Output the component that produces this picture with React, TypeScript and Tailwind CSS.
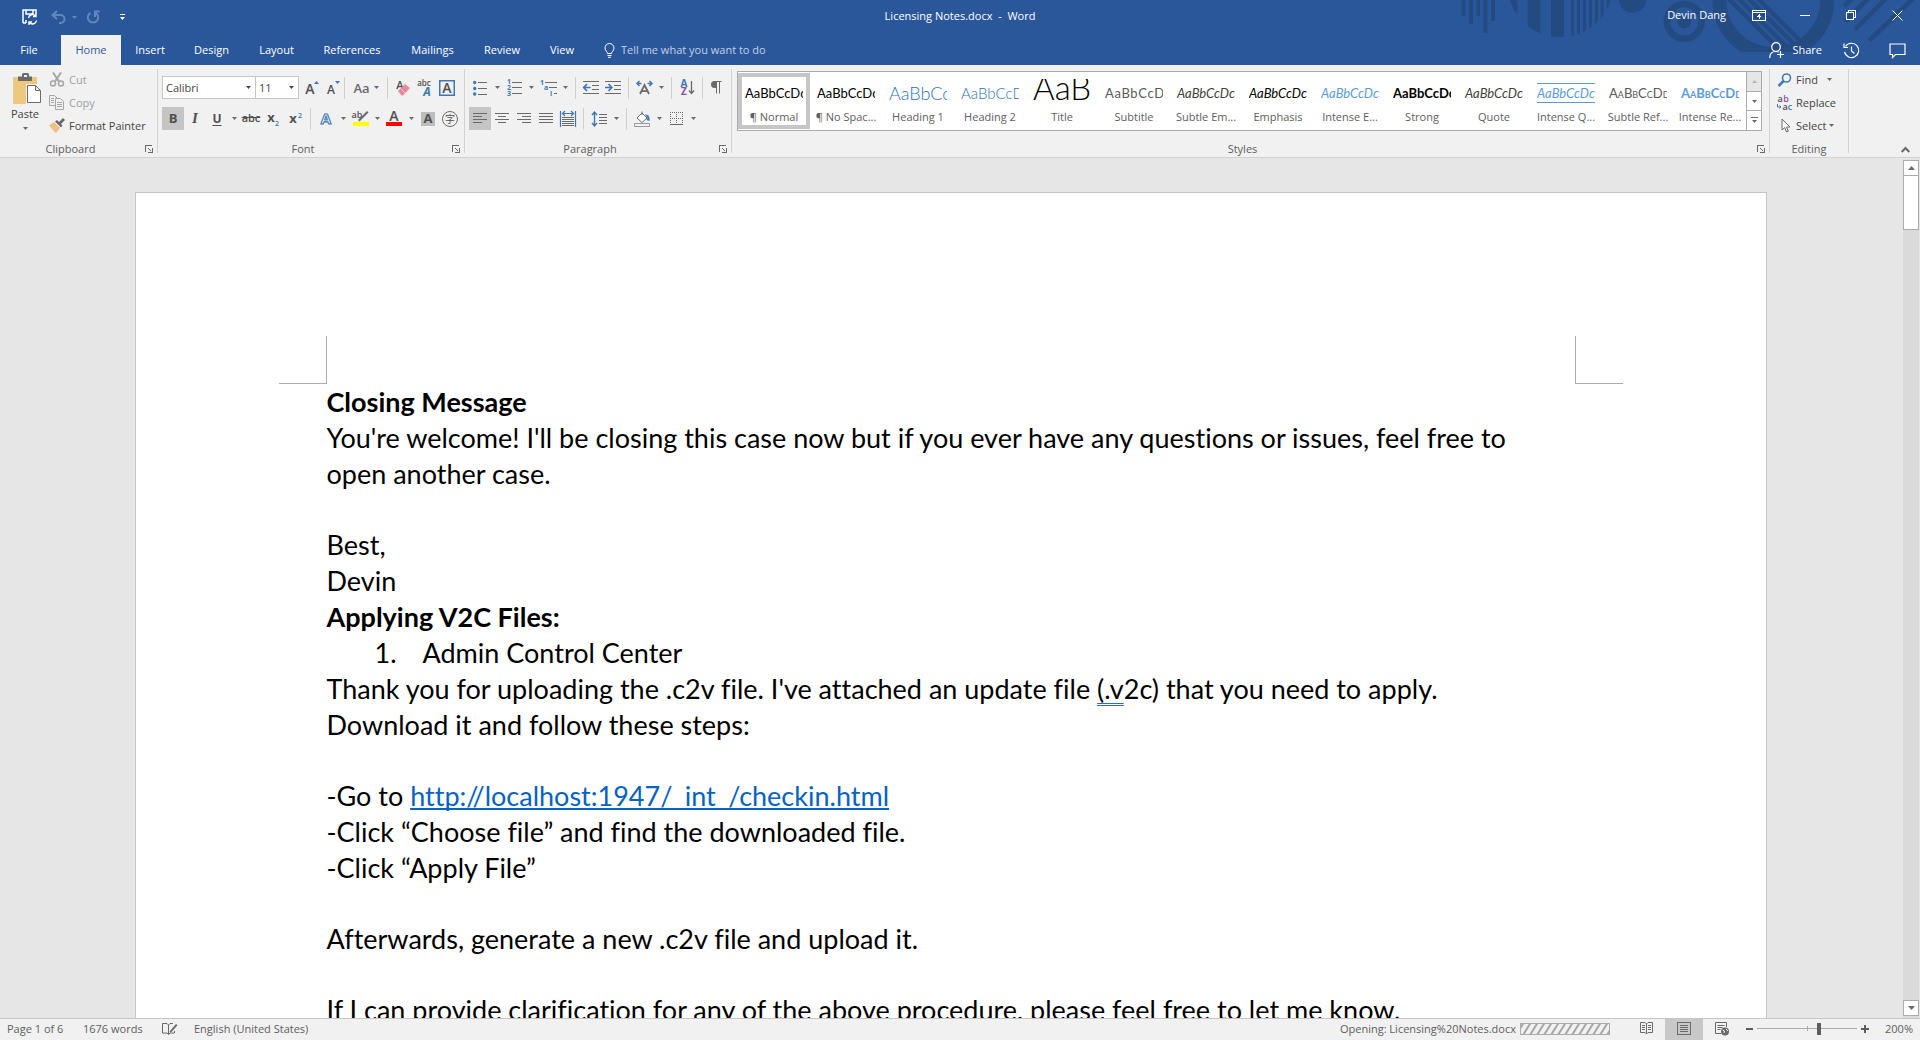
import React, { useState } from "react";

const UI_FONT = "font-['Open_Sans','Noto_Sans',sans-serif]";
const DOC_FONT = "font-['Lato','Open_Sans',sans-serif]";

const GRAY = "#6a6a6a";
const DARK = "#505050";
const BLUE = "#3e78b3";

type IconProps = { w: number; h: number; children: React.ReactNode; crisp?: boolean; className?: string };

function Icon({ w, h, children, crisp, className }: IconProps) {
  return (
    <svg
      width={w}
      height={h}
      viewBox={`0 0 ${w} ${h}`}
      fill="none"
      aria-hidden="true"
      className={`shrink-0 overflow-visible ${className ?? ""}`}
      shapeRendering={crisp ? "crispEdges" : undefined}
    >
      {children}
    </svg>
  );
}

function Caret({ color = "#6a6a6a" }: { color?: string }) {
  return (
    <Icon w={5} h={3}>
      <path d="M0 0h5L2.5 3z" fill={color} />
    </Icon>
  );
}

function Tool({ label, active, children, width = "w-[22px]" }: { label: string; active?: boolean; children: React.ReactNode; width?: string }) {
  return (
    <button
      type="button"
      aria-label={label}
      aria-pressed={active}
      className={`flex h-[23px] shrink-0 items-center justify-center ${width} ${active ? "bg-[#c5c5c5]" : ""}`}
    >
      {children}
    </button>
  );
}

function SplitTool({ label, children }: { label: string; children: React.ReactNode }) {
  return (
    <div className="flex">
      <Tool label={label}>{children}</Tool>
      <Tool label={`${label} options`} width="w-3">
        <Caret />
      </Tool>
    </div>
  );
}

function Sep() {
  return <span className="mx-1 h-[22px] w-px shrink-0 bg-[#d0d0d0]" />;
}

function GroupLabel({ children, launcher = true }: { children: string; launcher?: boolean }) {
  return (
    <div className="flex h-4 items-center text-[11px] leading-4 text-[#5e5e5e]">
      <span className="flex-1 text-center">{children}</span>
      {launcher && (
        <button type="button" aria-label={`${children} settings`} className="flex h-4 w-4 items-center justify-center">
          <Icon w={8} h={8} crisp>
            <path d="M0.5 7V0.5H7" stroke={GRAY} />
            <path d="M3 3l3 3M7.5 3v4.5H3" stroke={GRAY} />
          </Icon>
        </button>
      )}
    </div>
  );
}

function Group({ name, launcher, className, children }: { name: string; launcher?: boolean; className?: string; children: React.ReactNode }) {
  return (
    <section aria-label={name} className={`flex flex-col justify-between ${className ?? ""}`}>
      {children}
      <GroupLabel launcher={launcher}>{name}</GroupLabel>
    </section>
  );
}

function GroupDivider() {
  return <span className="my-1 w-px shrink-0 bg-[#d2d2d2]" />;
}

function HeaderArt() {
  return (
    <svg className="pointer-events-none absolute right-0 top-0" width="490" height="65" viewBox="0 0 1470 195" fill="#244a82" aria-hidden="true">
      <defs>
        <clipPath id="bars">
          <circle cx="391" cy="-46" r="158" />
        </clipPath>
        <clipPath id="ringInner">
          <circle cx="1030" cy="0" r="142" />
        </clipPath>
        <clipPath id="ringOuter">
          <rect x="840" y="0" width="390" height="157" />
        </clipPath>
      </defs>
      <path d="M95 0h11v48H95zM117 0h12v72h-12zM139 0h11v48h-11zM160 0h12v98h-12zM183 0h12v62h-12z" />
      <g clipPath="url(#bars)">
        <path d="M238 0h24v120h-24zM293 0h38v120h-38zM363 0h39v120h-39zM424 0h8v120h-8zM441 0h9v120h-9zM459 0h9v120h-9zM477 0h9v120h-9zM495 0h9v120h-9zM512 0h9v120h-9zM530 0h14v120h-14z" />
      </g>
      <circle cx="608" cy="-3" r="41" />
      <circle cx="763" cy="64" r="52" fill="none" stroke="#244a82" strokeWidth="20" />
      <circle cx="763" cy="64" r="21" />
      <g clipPath="url(#ringOuter)">
        <circle cx="1030" cy="0" r="162" fill="none" stroke="#244a82" strokeWidth="42" />
      </g>
      <g clipPath="url(#ringInner)" stroke="#244a82" strokeWidth="13">
        <path d="M895 -5l150 150M922 -8l150 150M950 -10l150 150M978 -10l140 140" />
      </g>
      <g stroke="#244a82" strokeWidth="14">
        <path d="M1243 18l25 -24M1245 65l70 -70M1275 88l95 -95M1318 122l130 -125" />
      </g>
    </svg>
  );
}

function TitleBar() {
  return (
    <div className="grid h-[35px] grid-cols-[1fr_auto_1fr] items-start text-[11px] leading-4 text-white">
      <div className="flex h-[34px] items-center pl-[14px]">
        <button type="button" aria-label="Save" className="flex h-6 w-8 items-center justify-center">
          <Icon w={16} h={16}>
            <path d="M1 14V1h13v4M1 14h3M4 1v4h7V1M4 14v-3" stroke="#fff" strokeWidth="1.5" />
            <path d="M6.5 9a4 4 0 0 1 7-2M14.500 11.5a4 4 0 0 1-7 2M14 4.500V7.500h-3M7 16v-3h3" stroke="#fff" strokeWidth="1.4" />
          </Icon>
        </button>
        <button type="button" aria-label="Undo" className="ml-[3px] flex h-6 w-[18px] items-center justify-center">
          <Icon w={15} h={14}>
            <path d="M6 1L1.5 5 6 9M2 5h7.500a4 4 0 0 1 0 8H8" stroke="#6187bb" strokeWidth="2" />
          </Icon>
        </button>
        <button type="button" aria-label="Undo history" className="flex h-6 w-[14px] items-center justify-center">
          <Caret color="#6187bb" />
        </button>
        <button type="button" aria-label="Redo" className="ml-[3px] flex h-6 w-[18px] items-center justify-center">
          <Icon w={14} h={14}>
            <path d="M4.500 2.800a5.200 5.200 0 1 0 5 0M9 7V1.500h4.500" stroke="#6187bb" strokeWidth="2" />
          </Icon>
        </button>
        <button type="button" aria-label="Customize quick access" className="ml-3 flex h-6 w-4 items-center justify-center">
          <Icon w={5} h={6}>
            <path d="M0 0h5v1H0zM0 3h5L2.5 6z" fill="#fff" />
          </Icon>
        </button>
      </div>
      <h1 className="flex h-8 items-center">Licensing Notes.docx&nbsp; -&nbsp; Word</h1>
      <div className="flex h-[30px] items-center justify-end">
        <span className="mr-2.5">Devin Dang</span>
        <button type="button" aria-label="Ribbon display options" className="flex h-full w-[46px] items-center justify-center">
          <Icon w={14} h={11} crisp>
            <path d="M0.5 0.5h13v10H0.500zM0.5 2.5h13" stroke="#fff" />
            <path d="M7 4v5M5 6.5h4M6 5.5h2" stroke="#fff" />
          </Icon>
        </button>
        <button type="button" aria-label="Minimize" className="flex h-full w-[46px] items-center justify-center">
          <span className="h-px w-2.5 bg-white" />
        </button>
        <button type="button" aria-label="Restore" className="flex h-full w-[46px] items-center justify-center">
          <Icon w={10} h={10} crisp>
            <path d="M0.5 2.5h7v7h-7zM2.5 2.5v-2h7v7h-2" stroke="#fff" />
          </Icon>
        </button>
        <button type="button" aria-label="Close" className="flex h-full w-[46px] items-center justify-center">
          <Icon w={11} h={11}>
            <path d="M0.5 0.5l10 10M10.5 0.5l-10 10" stroke="#fff" />
          </Icon>
        </button>
      </div>
    </div>
  );
}

const TABS = [
  { name: "File", cls: "w-[61px] pr-[3px]" },
  { name: "Home", cls: "w-[60px]" },
  { name: "Insert", cls: "w-[58px]" },
  { name: "Design", cls: "w-[65px]" },
  { name: "Layout", cls: "w-[65px]" },
  { name: "References", cls: "w-[86px]" },
  { name: "Mailings", cls: "w-[75px]" },
  { name: "Review", cls: "w-[64px]" },
  { name: "View", cls: "w-[56px]" },
];

function TabRow() {
  return (
    <div className="flex h-[30px] items-stretch text-[11px] leading-4 text-white">
      <nav role="tablist" aria-label="Ribbon" className="flex">
        {TABS.map((t) => (
          <button
            key={t.name}
            type="button"
            role="tab"
            aria-selected={t.name === "Home"}
            className={`flex items-center justify-center ${t.cls} ${t.name === "Home" ? "bg-[#f1f1f1] text-[#2a579a]" : ""}`}
          >
            {t.name}
          </button>
        ))}
      </nav>
      <label className="ml-[14px] flex items-center gap-1.5 text-[#c3d0e6]">
        <Icon w={11} h={15}>
          <path d="M3.5 10.5C3.5 8.5 1 8 1 5a4.5 4.5 0 0 1 9 0c0 3-2.5 3.5-2.5 5.5zM3.5 12.5h4M4 14.3h3" stroke="#fff" />
        </Icon>
        <input
          type="text"
          aria-label="Tell me what you want to do"
          placeholder="Tell me what you want to do"
          className="w-44 bg-transparent outline-none placeholder:text-[#c3d0e6]"
        />
      </label>
      <div className="ml-auto flex items-center pr-[14px]">
        <button type="button" className="flex items-center gap-[7px]">
          <Icon w={16} h={17}>
            <circle cx="7" cy="5" r="4.3" stroke="#fff" strokeWidth="1.2" />
            <path d="M0.7 16c0-4 2.3-6.5 6.3-6.5 1.2 0 2 .3 2.6.6M11.5 9v7M8 12.5h7" stroke="#fff" strokeWidth="1.2" />
          </Icon>
          Share
        </button>
        <button type="button" aria-label="Activity" className="ml-[21px]">
          <Icon w={17} h={17}>
            <path d="M2.5 4.500A7.200 7.200 0 1 1 1.5 10M1 1.500v4h4M8.500 4.500V9l3 2.5" stroke="#fff" strokeWidth="1.2" />
          </Icon>
        </button>
        <button type="button" aria-label="Comments" className="ml-[29px]">
          <Icon w={17} h={15}>
            <path d="M1 1h15v10.5H6.500L3.500 14.500v-3H1z" stroke="#fff" strokeWidth="1.2" />
          </Icon>
        </button>
      </div>
    </div>
  );
}

function ClipboardGroup() {
  return (
    <Group name="Clipboard" className="w-[157px]">
      <div className="flex pl-px pt-[3px] text-[11px] leading-4">
        <button type="button" className="flex w-12 flex-col items-center pt-1 text-[#444]">
          <Icon w={30} h={32} className="ml-1">
            <path d="M1 5h24v27H1z" fill="#edc87e" />
            <path d="M6 9V4.500h4V2.500Q10 1 11.500 1h4Q17 1 17 2.500v2h3V9z" fill={GRAY} />
            <path d="M12 3h3v2h-3z" fill="#f1f1f1" />
            <path d="M14 12h15v20H14z" fill="#f1f1f1" />
            <path d="M15.5 13.5h8l5 5v12h-13zM23.5 13.5v5h5" fill="#fff" stroke={GRAY} />
          </Icon>
          <span className="mt-0.5">Paste</span>
          <span className="flex h-[13px] items-center"><Caret /></span>
        </button>
        <div className="flex flex-col">
          <button type="button" className="flex h-[23px] items-center gap-1 text-[#a0a0a0]">
            <Icon w={16} h={15}>
              <path d="M4 0.500l6 9M12 0.500l-6 9" stroke="#a6a6a6" strokeWidth="2" />
              <circle cx="4" cy="11.5" r="2.5" stroke="#a6a6a6" strokeWidth="1.5" />
              <circle cx="12" cy="11.5" r="2.5" stroke="#a6a6a6" strokeWidth="1.5" />
            </Icon>
            Cut
          </button>
          <button type="button" className="flex h-[23px] items-center gap-1 text-[#a0a0a0]">
            <Icon w={16} h={15}>
              <path d="M0.5 0.5h5l3 3v7h-8z" stroke="#a6a6a6" fill="#f1f1f1" />
              <path d="M2 3.5h3M2 5.5h3M2 7.5h3" stroke="#a6a6a6" />
              <path d="M6.5 3.5h5l3 3v8h-8z" stroke="#a6a6a6" fill="#f1f1f1" />
              <path d="M8 7.5h5M8 9.5h5M8 11.5h5" stroke="#a6a6a6" />
            </Icon>
            Copy
          </button>
          <button type="button" className="flex h-[23px] items-center gap-1 text-[#444]">
            <Icon w={16} h={15}>
              <path d="M0 7.500L5 4l6 6-3.500 4.500H6z" fill="#edc087" />
              <path d="M6 3.500l2-1.500 2 2L14 0l2 2-4 4 1.500 1.500L12 9.500z" fill={GRAY} />
            </Icon>
            Format Painter
          </button>
        </div>
      </div>
    </Group>
  );
}

function ComboBox({ label, options, className }: { label: string; options: string[]; className: string }) {
  return (
    <span className={`relative flex h-[23px] items-center border border-[#c6c6c6] bg-white ${className}`}>
      <select aria-label={label} className="h-full w-full appearance-none bg-transparent pl-[3px] text-[11px] leading-4 text-[#444] outline-none">
        {options.map((o) => (
          <option key={o}>{o}</option>
        ))}
      </select>
      <span className="pointer-events-none absolute right-1 top-[9px] flex"><Caret color="#444" /></span>
    </span>
  );
}

type GlyphProps = { x: number; y: number; size: number; children: string; fill?: string; weight?: number; italic?: boolean };

function Glyph({ x, y, size, children, fill = DARK, weight = 600, italic }: GlyphProps) {
  return (
    <text x={x} y={y} fontSize={size} fill={fill} fontWeight={weight} fontStyle={italic ? "italic" : undefined} textAnchor="middle">
      {children}
    </text>
  );
}

function FontGroup() {
  const [bold, setBold] = useState(true);
  return (
    <Group name="Font" className="w-[306px]">
      <div className="flex flex-col gap-2 pl-1 pt-[11px]">
        <div className="flex">
          <ComboBox label="Font" options={["Calibri", "Arial"]} className="w-[94px]" />
          <ComboBox label="Font size" options={["11", "12"]} className="-ml-px w-11" />
          <div className="ml-px flex items-center">
            <Tool label="Grow font">
              <Icon w={18} h={16}>
                <Glyph x={8} y={14} size={14}>A</Glyph>
                <path d="M12 4l2.500-3L17 4z" fill={BLUE} />
              </Icon>
            </Tool>
            <Tool label="Shrink font">
              <Icon w={18} h={16}>
                <Glyph x={7} y={14} size={12}>A</Glyph>
                <path d="M11 1l2.500 3L16 1z" fill={BLUE} />
              </Icon>
            </Tool>
            <span className="mr-1 h-[22px] w-px bg-[#d0d0d0]" />
            <button type="button" aria-label="Change case" className="flex h-[23px] w-[34px] items-center justify-center gap-1 text-[13px] font-semibold leading-4 text-[#6a6a6a]">
              Aa <Caret />
            </button>
            <Sep />
            <Tool label="Clear formatting">
              <Icon w={16} h={16}>
                <Glyph x={5} y={9} size={11}>A</Glyph>
                <path d="M3 11l7-7 5 4-7 7.500H6.500z" fill="#e8899a" />
                <path d="M5.500 8.500l4.500 4.500" stroke="#f7c4cc" />
              </Icon>
            </Tool>
            <Tool label="Phonetic guide">
              <Icon w={16} h={18}>
                <Glyph x={7} y={7} size={8}>abc</Glyph>
                <Glyph x={10} y={17} size={12} fill={BLUE} weight={700} italic>A</Glyph>
              </Icon>
            </Tool>
            <Tool label="Character border">
              <Icon w={16} h={16}>
                <path d="M0.750 0.750h14.500v14.500H0.750z" stroke={BLUE} strokeWidth="1.5" />
                <Glyph x={8} y={13} size={14}>A</Glyph>
              </Icon>
            </Tool>
          </div>
        </div>
        <div className="flex items-center text-[#505050]">
          <button
            type="button"
            aria-pressed={bold}
            aria-label="Bold"
            onClick={() => setBold(!bold)}
            className={`flex h-[23px] w-[22px] items-center justify-center text-[13px] font-bold ${bold ? "bg-[#c5c5c5]" : ""}`}
          >
            B
          </button>
          <Tool label="Italic"><span className="font-['Liberation_Serif',serif] text-[15px] font-bold italic">I</span></Tool>
          <Tool label="Underline"><span className="text-[12px] font-bold underline underline-offset-2">U</span></Tool>
          <Tool label="Underline style" width="w-3"><Caret /></Tool>
          <Tool label="Strikethrough"><span className="text-[11px] font-semibold line-through">abc</span></Tool>
          <Tool label="Subscript">
            <Icon w={14} h={14}>
              <Glyph x={5} y={10} size={13} weight={700}>x</Glyph>
              <Glyph x={11} y={14} size={7} fill={BLUE}>2</Glyph>
            </Icon>
          </Tool>
          <Tool label="Superscript">
            <Icon w={14} h={14}>
              <Glyph x={5} y={11} size={13} weight={700}>x</Glyph>
              <Glyph x={12} y={6} size={7} fill={BLUE}>2</Glyph>
            </Icon>
          </Tool>
          <Sep />
          <SplitTool label="Text effects">
            <Icon w={16} h={16}>
              <text x="8" y="13" fontSize="15" fontWeight="700" textAnchor="middle" fill="#fff" stroke={BLUE} strokeWidth="1.1">A</text>
            </Icon>
          </SplitTool>
          <SplitTool label="Text highlight">
            <Icon w={17} h={17}>
              <Glyph x={5} y={8} size={9}>ab</Glyph>
              <path d="M6 10l3-3 6-6 1.500 1.500-6 6-3 3z" fill={GRAY} />
              <path d="M1 12h16v4H1z" fill="#ff0" />
            </Icon>
          </SplitTool>
          <SplitTool label="Font color">
            <Icon w={16} h={17}>
              <Glyph x={8} y={11} size={14}>A</Glyph>
              <path d="M0 12h16v4H0z" fill="#f00" />
            </Icon>
          </SplitTool>
          <Tool label="Character shading">
            <span className="flex h-[14px] w-[14px] items-center justify-center bg-[#bdbdbd] text-[13px] font-bold leading-none">A</span>
          </Tool>
          <Tool label="Enclose characters">
            <span className="flex h-4 w-4 items-center justify-center rounded-full border border-[#6a6a6a] font-['Noto_Sans_CJK_SC',sans-serif] text-[10px] leading-none">字</span>
          </Tool>
        </div>
      </div>
    </Group>
  );
}

function Lines({ widths, align }: { widths: number[]; align: "l" | "c" | "r" }) {
  return (
    <Icon w={14} h={13} crisp>
      {widths.map((w, i) => (
        <rect key={i} x={align === "l" ? 0 : align === "c" ? (14 - w) / 2 : 14 - w} y={1 + i * 3} width={w} height={1} fill={GRAY} />
      ))}
    </Icon>
  );
}

function ParagraphGroup() {
  return (
    <Group name="Paragraph" className="w-[266px]">
      <div className="flex flex-col gap-2 pl-1 pt-[11px]">
        <div className="flex items-center">
          <SplitTool label="Bullets">
            <Icon w={14} h={16}>
              <path d="M5 2.5h9M5 8.5h9M5 14.5h9" stroke={GRAY} />
              <circle cx="1.7" cy="2.5" r="1.7" fill={BLUE} />
              <circle cx="1.7" cy="8.5" r="1.7" fill={BLUE} />
              <circle cx="1.7" cy="14" r="1.7" fill={BLUE} />
            </Icon>
          </SplitTool>
          <SplitTool label="Numbering">
            <Icon w={15} h={17}>
              <path d="M5 3.5h10M5 8.5h10M5 14.5h10" stroke={GRAY} />
              <Glyph x={2} y={5} size={7} fill={BLUE} weight={700}>1</Glyph>
              <Glyph x={2} y={11} size={7} fill={BLUE} weight={700}>2</Glyph>
              <Glyph x={2} y={17} size={7} fill={BLUE} weight={700}>3</Glyph>
            </Icon>
          </SplitTool>
          <SplitTool label="Multilevel list">
            <Icon w={17} h={17}>
              <path d="M5 3.5h12M9 8.5h8M14 14.5h3" stroke={GRAY} />
              <Glyph x={2} y={6} size={7} fill={BLUE} weight={700}>1</Glyph>
              <Glyph x={6} y={11} size={7} fill={BLUE} weight={700}>a</Glyph>
              <Glyph x={11} y={17} size={7} fill={BLUE} weight={700}>i</Glyph>
            </Icon>
          </SplitTool>
          <Sep />
          <Tool label="Decrease indent">
            <Icon w={16} h={13}>
              <path d="M0 0.5h16M9 4.5h7M9 8.5h7M0 12.5h16" stroke={GRAY} />
              <path d="M0.5 6.5h7M4 3L0.7 6.5 4 10" stroke={BLUE} strokeWidth="1.7" />
            </Icon>
          </Tool>
          <Tool label="Increase indent">
            <Icon w={16} h={13}>
              <path d="M0 0.5h16M9 4.5h7M9 8.5h7M0 12.5h16" stroke={GRAY} />
              <path d="M0 6.5h7M3.5 3l3.3 3.5L3.5 10" stroke={BLUE} strokeWidth="1.7" />
            </Icon>
          </Tool>
          <Sep />
          <SplitTool label="Asian layout">
            <Icon w={17} h={15}>
              <path d="M4 14L8.500 5l4.500 9M5.500 11.200h6" stroke={GRAY} strokeWidth="1.8" />
              <path d="M1 3.5h4.500M3.500 1L1 3.500 3.500 6M16 3.500h-4.500M13.500 1L16 3.500 13.500 6" stroke={BLUE} strokeWidth="1.5" />
            </Icon>
          </SplitTool>
          <Sep />
          <Tool label="Sort">
            <Icon w={15} h={17}>
              <Glyph x={4} y={8} size={10} fill={BLUE} weight={700}>A</Glyph>
              <Glyph x={4} y={16} size={10} fill="#8a4fa8" weight={700}>Z</Glyph>
              <path d="M11.5 2v12M9 11.5l2.500 3 2.500-3" stroke={GRAY} strokeWidth="1.3" />
            </Icon>
          </Tool>
          <Sep />
          <Tool label="Show paragraph marks">
            <Icon w={11} h={13} className="mr-1">
              <path d="M5 7H3.500A3.300 3.300 0 0 1 3.500 0H10.500V1H9V12.500H8V1H6V12.500H5z" fill={GRAY} />
            </Icon>
          </Tool>
        </div>
        <div className="flex items-center">
          <Tool label="Align left" active><Lines align="l" widths={[14, 9, 14, 9]} /></Tool>
          <Tool label="Center"><Lines align="c" widths={[14, 8, 14, 8]} /></Tool>
          <Tool label="Align right"><Lines align="r" widths={[14, 9, 14, 9]} /></Tool>
          <Tool label="Justify"><Lines align="l" widths={[14, 14, 14, 14]} /></Tool>
          <Tool label="Distribute">
            <Icon w={16} h={16}>
              <path d="M0.5 0v16M15.5 0v16M2.5 2.500h11M5 0L2.500 2.500 5 5M11 0l2.500 2.500L11 5" stroke={BLUE} strokeWidth="1.2" />
              <path d="M2 6.500h12M2 8.500h12M2 10.500h12M2 12.500h12M2 14.500h12" stroke={GRAY} />
            </Icon>
          </Tool>
          <Sep />
          <SplitTool label="Line spacing">
            <Icon w={15} h={16}>
              <path d="M2.5 1.5v13M0 4l2.500-3L5 4M0 12l2.500 3L5 12" stroke={BLUE} strokeWidth="1.4" />
              <path d="M7 3.5h8M7 6.5h8M7 9.5h8M7 12.5h8" stroke={GRAY} />
            </Icon>
          </SplitTool>
          <Sep />
          <SplitTool label="Shading">
            <Icon w={17} h={16}>
              <path d="M3 7l5-5 5 5-5 4.500zM8 4V0.500" stroke={GRAY} fill="#fff" />
              <path d="M11 3.500c3.500 0 5 2 4.500 6.500L12.500 9l1-2z" fill={BLUE} />
              <path d="M0.5 12.5h15v3H0.500z" stroke="#999" fill="#f1f1f1" />
            </Icon>
          </SplitTool>
          <SplitTool label="Borders">
            <Icon w={13} h={13} crisp>
              <path d="M0 0.5h13M0 6.5h13M0.5 0v12M6.5 0v12M12.5 0v12" stroke={GRAY} strokeDasharray="1 1" />
              <path d="M0 12.5h13" stroke={GRAY} />
            </Icon>
          </SplitTool>
        </div>
      </div>
    </Group>
  );
}

const SAMPLE_BOX = "mt-0.5 h-6";

const STYLES = [
  { label: "¶ Normal", sample: "AaBbCcDc", box: SAMPLE_BOX, cls: "text-[13px] leading-7 text-black" },
  { label: "¶ No Spac...", sample: "AaBbCcDc", box: SAMPLE_BOX, cls: "text-[13px] leading-7 text-black" },
  { label: "Heading 1", sample: "AaBbCc", box: SAMPLE_BOX, cls: "text-[18px] font-light leading-7 text-[#2e74b5]" },
  { label: "Heading 2", sample: "AaBbCcD", box: SAMPLE_BOX, cls: "text-[15px] font-light leading-7 text-[#2e74b5]" },
  { label: "Title", sample: "AaB", box: SAMPLE_BOX, cls: "text-[33px] font-light leading-4 text-black" },
  { label: "Subtitle", sample: "AaBbCcD", box: SAMPLE_BOX, cls: "text-[13px] leading-7 tracking-wider text-[#5a5a5a]" },
  { label: "Subtle Em...", sample: "AaBbCcDc", box: SAMPLE_BOX, cls: "text-[13px] italic leading-7 text-[#404040]" },
  { label: "Emphasis", sample: "AaBbCcDc", box: SAMPLE_BOX, cls: "text-[13px] italic leading-7 text-black" },
  { label: "Intense E...", sample: "AaBbCcDc", box: SAMPLE_BOX, cls: "text-[13px] italic leading-7 text-[#5b9bd5]" },
  { label: "Strong", sample: "AaBbCcDc", box: SAMPLE_BOX, cls: "text-[13px] font-bold leading-7 text-black" },
  { label: "Quote", sample: "AaBbCcDc", box: SAMPLE_BOX, cls: "text-[13px] italic leading-7 text-[#404040]" },
  { label: "Intense Q...", sample: "AaBbCcDc", box: "mt-1.5 h-5 border-y border-[#5b9bd5]", cls: "text-[13px] italic leading-[18px] text-[#5b9bd5]" },
  { label: "Subtle Ref...", sample: "AaBbCcDd", box: SAMPLE_BOX, cls: "text-[13px] leading-7 [font-variant-caps:small-caps] text-[#5a5a5a]" },
  { label: "Intense Re...", sample: "AaBbCcDd", box: SAMPLE_BOX, cls: "text-[13px] font-bold leading-7 [font-variant-caps:small-caps] text-[#5b9bd5]" },
];

function StylesGroup() {
  return (
    <Group name="Styles" className="min-w-0 flex-1">
      <div className="flex pl-[5px] pr-[7px] pt-1.5">
        <div className="flex h-[60px] min-w-0 flex-1 border border-[#ababab] bg-white">
          <div className="flex min-w-0 flex-1 overflow-hidden pt-px">
            {STYLES.map((s, i) => (
              <button
                key={s.label}
                type="button"
                className={`flex h-14 w-[72px] shrink-0 flex-col items-center justify-between border-4 ${i === 0 ? "border-[#c6c6c6]" : "border-transparent"}`}
              >
                <span className={`w-[58px] overflow-hidden whitespace-nowrap text-left ${s.box}`}>
                  <span className={`block ${DOC_FONT} ${s.cls}`}>{s.sample}</span>
                </span>
                <span className="whitespace-nowrap text-[11px] leading-4 text-[#5e5e5e]">{s.label}</span>
              </button>
            ))}
          </div>
          <div className="flex w-[15px] flex-col border-l border-[#ababab]">
            <button type="button" aria-label="Previous styles" className="flex flex-1 items-center justify-center bg-[#e6e6e6]">
              <Icon w={5} h={3}><path d="M0 3h5L2.5 0z" fill="#b5b5b5" /></Icon>
            </button>
            <button type="button" aria-label="Next styles" className="flex flex-1 items-center justify-center border-y border-[#ababab]">
              <Caret />
            </button>
            <button type="button" aria-label="All styles" className="flex flex-1 items-center justify-center">
              <Icon w={7} h={7}><path d="M0 0h7v1H0zM1 3h5L3.5 6z" fill={GRAY} /></Icon>
            </button>
          </div>
        </div>
      </div>
    </Group>
  );
}

function EditingGroup() {
  return (
    <Group name="Editing" launcher={false} className="w-[78px]">
      <div className="flex flex-col pl-[7px] pt-[3px] text-[11px] leading-4 text-[#444]">
        <button type="button" className="flex h-[23px] items-center gap-[3px]">
          <Icon w={16} h={14}>
            <circle cx="9.5" cy="5" r="4" stroke={BLUE} strokeWidth="1.6" />
            <path d="M6.500 8l-5 5" stroke={BLUE} strokeWidth="2.5" />
          </Icon>
          Find
          <span className="ml-1.5"><Caret /></span>
        </button>
        <button type="button" className="flex h-[23px] items-center gap-[3px]">
          <Icon w={16} h={16}>
            <Glyph x={3} y={7} size={9}>a</Glyph>
            <Glyph x={9} y={7} size={9} fill="#8a4fa8">b</Glyph>
            <Glyph x={8} y={15} size={9}>a</Glyph>
            <Glyph x={13} y={15} size={9} fill={BLUE}>c</Glyph>
            <path d="M0.5 9v3H4M2.5 10.500L4 12l-1.500 1.500" stroke={BLUE} />
          </Icon>
          Replace
        </button>
        <button type="button" className="flex h-[23px] items-center gap-[3px]">
          <Icon w={16} h={15}>
            <path d="M5 1v11l2.700-2.500L9.500 14l1.800-.8L9.500 9H13z" stroke={GRAY} fill="#fff" />
          </Icon>
          Select
          <Caret />
        </button>
      </div>
    </Group>
  );
}

function Ribbon() {
  return (
    <div className="flex h-[93px] shrink-0 border-b border-[#d2d2d2] bg-[#f1f1f1]">
      <ClipboardGroup />
      <GroupDivider />
      <FontGroup />
      <GroupDivider />
      <ParagraphGroup />
      <GroupDivider />
      <StylesGroup />
      <GroupDivider />
      <EditingGroup />
      <GroupDivider />
      <div className="flex w-[71px] items-end justify-end pb-1 pr-2.5">
        <button type="button" aria-label="Collapse the ribbon">
          <Icon w={9} h={7}>
            <path d="M0.7 6L4.500 2l3.800 4" stroke={GRAY} strokeWidth="2" />
          </Icon>
        </button>
      </div>
    </div>
  );
}

function Page() {
  return (
    <article className="h-full w-[1632px] max-w-full shrink-0 overflow-hidden border border-b-0 border-[#c6c6c6] bg-white">
      <div className="flex justify-between px-[143px] pt-[143px]">
        <span className="h-12 w-12 border-b border-r border-[#ababab]" />
        <span className="h-12 w-12 border-b border-l border-[#ababab]" />
      </div>
      <div className={`whitespace-nowrap px-[191px] text-[27px] leading-9 text-black [font-variant-ligatures:none] ${DOC_FONT}`}>
        <h2 className="font-bold">Closing Message</h2>
        <p>
          You're welcome! I'll be closing this case now but if you ever have any questions or issues, feel free to
          <br />
          open another case.
        </p>
        <p className="pt-[35px]">
          Best,
          <br />
          Devin
        </p>
        <h2 className="font-bold">Applying V2C Files:</h2>
        <ol className="list-none">
          <li className="flex pl-12">
            <span className="w-12">1.</span>Admin Control Center
          </li>
        </ol>
        <p>
          Thank you for uploading the .c2v file. I've attached an update file{" "}
          <span className="underline decoration-[#2f66d0] decoration-double decoration-1 underline-offset-4 [text-decoration-skip-ink:none]">(.v</span>2c) that you need to apply.
          <br />
          Download it and follow these steps:
        </p>
        <p className="pt-[35px]">
          -Go to{" "}
          <a href="http://localhost:1947/_int_/checkin.html" className="text-[#0563c1] underline decoration-2 underline-offset-2 [text-decoration-skip-ink:none]">
            http://localhost:1947/_int_/checkin.html
          </a>
          <br />
          -Click “Choose file” and find the downloaded file.
          <br />
          -Click “Apply File”
        </p>
        <p className="pt-[35px]">Afterwards, generate a new .c2v file and upload it.</p>
        <p className="pt-[35px]">If I can provide clarification for any of the above procedure, please feel free to let me know.</p>
      </div>
    </article>
  );
}

function Workspace() {
  return (
    <main className="flex min-h-0 flex-1 bg-[#e6e6e6]">
      <div className="flex min-w-0 flex-1 justify-center overflow-hidden pr-0.5 pt-[34px]">
        <Page />
      </div>
      <div className="mr-px mt-0.5 flex w-4 flex-col bg-[#dadada]">
        <button type="button" aria-label="Scroll up" className="flex h-4 items-center justify-center border border-[#ababab] bg-white">
          <Icon w={7} h={4}><path d="M0 4h7L3.5 0z" fill={GRAY} /></Icon>
        </button>
        <div className="-mt-px h-[55px] border border-[#ababab] bg-white" />
        <button type="button" aria-label="Scroll down" className="mb-0.5 mt-auto flex h-4 items-center justify-center border border-[#ababab] bg-white">
          <Icon w={7} h={4}><path d="M0 0h7L3.5 4z" fill={GRAY} /></Icon>
        </button>
      </div>
    </main>
  );
}

function StatusBar() {
  return (
    <footer className="flex h-[22px] shrink-0 items-center border-t border-[#c6c6c6] bg-[#f1f1f1] text-[11px] leading-4 text-[#5e5e5e]">
      <span className="w-[76px] pb-0.5 pl-[7px]">Page 1 of 6</span>
      <span className="w-[86px] pb-0.5 pl-[7px]">1676 words</span>
      <button type="button" aria-label="Proofing" className="pb-0.5">
        <Icon w={16} h={14}>
          <path d="M6.5 3L5 1.500H0.500v9.500H5l1.500 1.500zM6.500 3L8 1.500h3M6.500 12.500L8 11h4.500V9" stroke={GRAY} />
          <path d="M8 9l6-7 1.500 1.300-6 6.700-2 .5z" fill={GRAY} />
        </Icon>
      </button>
      <span className="ml-4 pb-0.5">English (United States)</span>
      <div className="ml-auto flex h-full items-center">
        <span className="pb-0.5">Opening: Licensing%20Notes.docx</span>
        <Icon w={90} h={12} className="mb-px ml-1">
          <defs>
            <pattern id="hatch" width="7" height="12" patternUnits="userSpaceOnUse">
              <path d="M-4 12L3.5 0M3 12L10.5 0" stroke="#a6a6a6" strokeWidth="2" />
            </pattern>
          </defs>
          <rect x="0.5" y="0.5" width="89" height="11" fill="url(#hatch)" stroke="#ababab" />
        </Icon>
        <button type="button" aria-label="Read mode" className="ml-[17px] flex h-full w-[38px] items-center justify-center pb-0.5">
          <Icon w={13} h={13}>
            <path d="M6.5 2L5 0.500H0.500v10H5L6.500 12 8 10.500h4.500v-10H8zV12M2 3.500h3M2 5.500h3M2 7.500h3M8 3.500h3M8 5.500h3M8 7.500h3" stroke={GRAY} />
          </Icon>
        </button>
        <button type="button" aria-label="Print layout" aria-pressed="true" className="flex h-full w-[38px] items-center justify-center bg-[#c8c8c8] pb-0.5">
          <Icon w={14} h={13} crisp>
            <path d="M0.5 0.5h13v12H0.500zM3 3.500h8M3 5.500h8M3 7.500h8M3 9.500h8" stroke={GRAY} />
          </Icon>
        </button>
        <button type="button" aria-label="Web layout" className="flex h-full w-[38px] items-center justify-center pb-0.5">
          <Icon w={14} h={14}>
            <path d="M6 11.500H0.500v-11h11V5M2.500 3.500h7M2.500 5.500h5M2.500 7.500h3" stroke={GRAY} />
            <circle cx="10" cy="9.5" r="4" fill={GRAY} />
            <path d="M7.500 8l2 1-.5 2M11 7l2 2" stroke="#f1f1f1" />
          </Icon>
        </button>
        <button type="button" aria-label="Zoom out" className="ml-[5px] flex w-[7px] pb-px">
          <span className="h-0.5 w-full bg-[#5e5e5e]" />
        </button>
        <label className="relative mb-px ml-1 flex h-3 w-[100px] items-center">
          <span className="absolute left-0 top-[5px] h-px w-full bg-[#ababab]" />
          <span className="absolute left-1/2 top-[3px] h-[5px] w-px bg-[#ababab]" />
          <input
            type="range"
            aria-label="Zoom"
            min={0}
            max={100}
            defaultValue={63}
            className="relative h-3 w-full appearance-none bg-transparent [&::-webkit-slider-thumb]:h-3 [&::-webkit-slider-thumb]:w-1 [&::-webkit-slider-thumb]:appearance-none [&::-webkit-slider-thumb]:bg-[#5e5e5e]"
          />
        </label>
        <button type="button" aria-label="Zoom in" className="ml-1 pb-px">
          <Icon w={8} h={8} crisp><path d="M3 0h2v3h3v2H5v3H3V5H0V3h3z" fill="#5e5e5e" /></Icon>
        </button>
        <span className="w-[51px] pb-0.5 pr-[7px] text-right">200%</span>
      </div>
    </footer>
  );
}

export default function App() {
  return (
    <div className={`flex h-screen flex-col overflow-hidden bg-[#e6e6e6] ${UI_FONT}`}>
      <header className="relative shrink-0 bg-[#2a579a]">
        <HeaderArt />
        <div className="relative">
          <TitleBar />
          <TabRow />
        </div>
      </header>
      <Ribbon />
      <Workspace />
      <StatusBar />
    </div>
  );
}
